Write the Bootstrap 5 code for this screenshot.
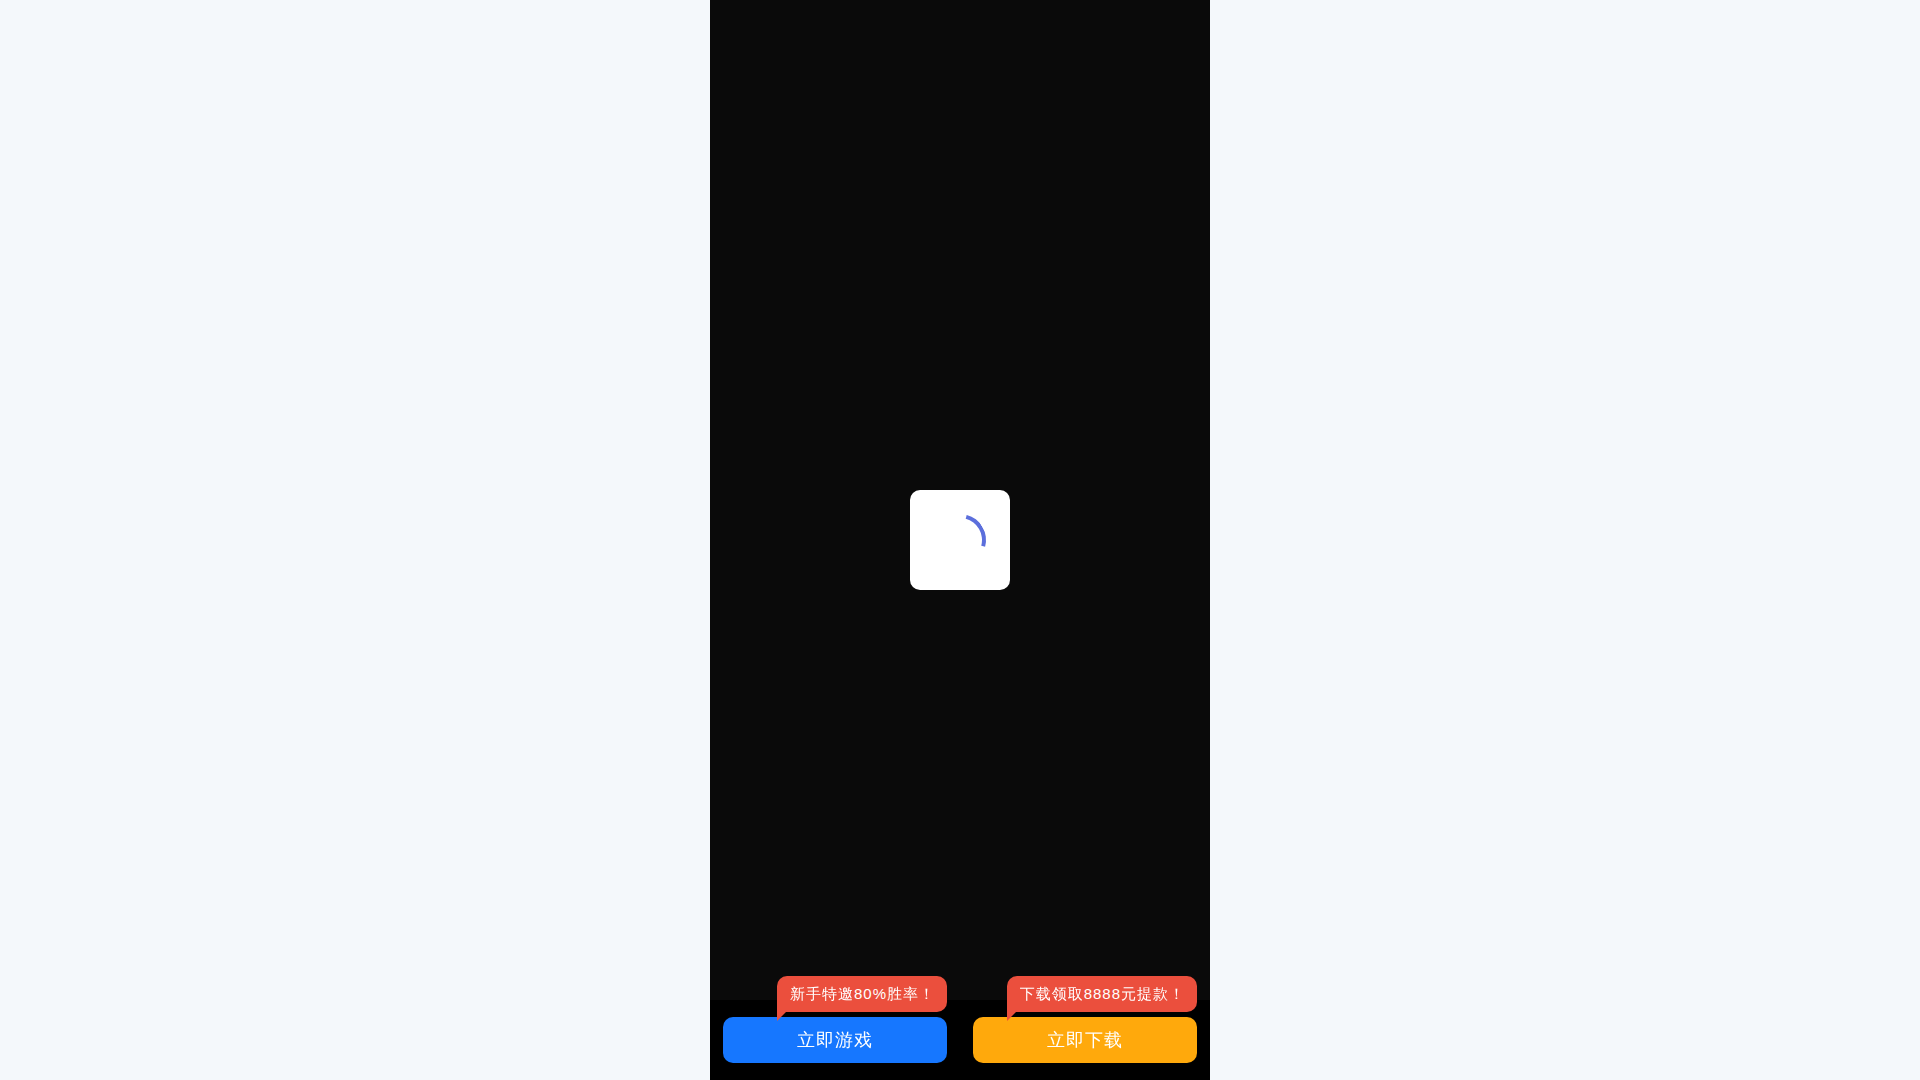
<!DOCTYPE html>
<html lang="zh-CN">
<head>
<meta charset="utf-8">
<meta name="viewport" content="width=device-width, initial-scale=1">
<title>立即游戏</title>
<link href="https://cdn.jsdelivr.net/npm/bootstrap@5.3.0/dist/css/bootstrap.min.css" rel="stylesheet">
<style>
body { background: #f4f8fb; font-family: "Liberation Sans", "WenQuanYi Zen Hei", "Noto Sans CJK SC", sans-serif; letter-spacing: 1px; }
.phone { max-width: 500px; background: #0a0a0a; }
.loader-box { width: 100px; height: 100px; border-radius: 10px; }
.loader-ring { width: 52px; height: 52px; border: 4px solid transparent; border-top-color: #5c6fdc; border-radius: 50%; transform: rotate(60deg); }
.action-bar { height: 80px; padding: 17px 13px; gap: 26px; }
.action { height: 46px; padding: 0; border: 0; border-radius: 10px; font-size: 18px; line-height: 46px; letter-spacing: 1px; color: #fff; }
.action-play { background: #1677ff; }
.action-load { background: #ffa90c; }
.bubble { right: 0; bottom: 51px; height: 36px; padding: 0 12px 0 13px; border-radius: 10px 10px 10px 0; background: #eb4f3d; color: #fff; font-size: 15px; line-height: 36px; pointer-events: none; }
.bubble::after { content: ""; position: absolute; left: 0; top: 100%; border-top: 9px solid #eb4f3d; border-right: 9px solid transparent; }
</style>
<script src="https://cdn.jsdelivr.net/npm/bootstrap@5.3.0/dist/js/bootstrap.bundle.min.js" defer></script>
</head>
<body>
<main class="phone vh-100 w-100 mx-auto d-flex flex-column justify-content-end">
  <div class="position-fixed top-50 start-50 translate-middle loader-box bg-white d-flex align-items-center justify-content-center" role="status" aria-label="加载中">
    <div class="loader-ring"></div>
  </div>
  <div class="action-bar d-flex bg-black">
    <div class="position-relative flex-fill w-50">
      <span class="bubble position-absolute text-nowrap">新手特邀80%胜率！</span>
      <button type="button" class="btn action action-play w-100">立即游戏</button>
    </div>
    <div class="position-relative flex-fill w-50">
      <span class="bubble position-absolute text-nowrap">下载领取8888元提款！</span>
      <button type="button" class="btn action action-load w-100">立即下载</button>
    </div>
  </div>
</main>
</body>
</html>
